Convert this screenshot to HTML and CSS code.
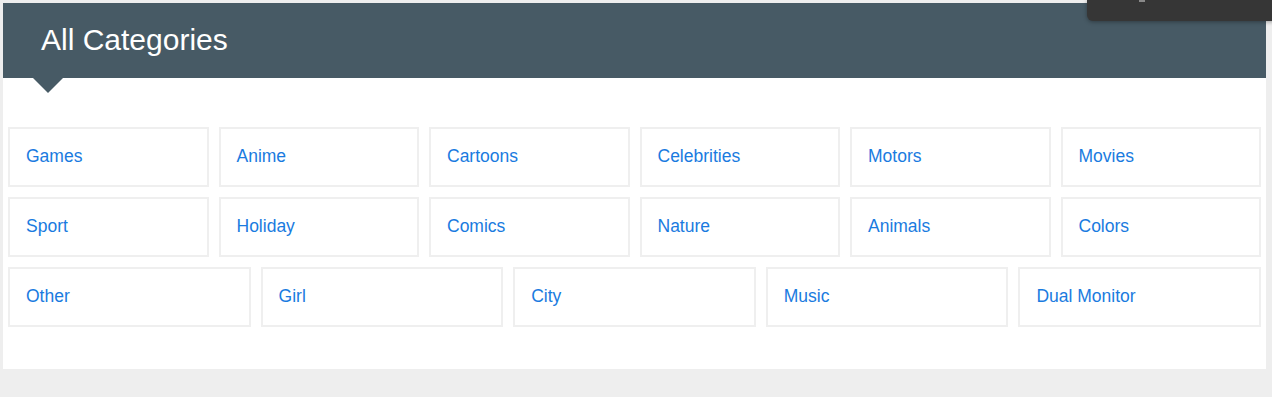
FILE: index.html
```html
<!DOCTYPE html>
<html lang="en">
<head>
    <meta charset="UTF-8">
    <meta name="viewport" content="width=device-width, initial-scale=1.0">
    <title>All Categories</title>
    <link rel="stylesheet" href="styles.css">
</head>
<body>
    <div class="panel">
        <div class="panel-head">
            <h2>All Categories</h2>
        </div>
        <div class="cats">
            <ul class="row six">
                <li><a href="javascript:;">Games</a></li>
                <li><a href="javascript:;">Anime</a></li>
                <li><a href="javascript:;">Cartoons</a></li>
                <li><a href="javascript:;">Celebrities</a></li>
                <li><a href="javascript:;">Motors</a></li>
                <li><a href="javascript:;">Movies</a></li>
                <li><a href="javascript:;">Sport</a></li>
                <li><a href="javascript:;">Holiday</a></li>
                <li><a href="javascript:;">Comics</a></li>
                <li><a href="javascript:;">Nature</a></li>
                <li><a href="javascript:;">Animals</a></li>
                <li><a href="javascript:;">Colors</a></li>
            </ul>
            <ul class="row five">
                <li><a href="javascript:;">Other</a></li>
                <li><a href="javascript:;">Girl</a></li>
                <li><a href="javascript:;">City</a></li>
                <li><a href="javascript:;">Music</a></li>
                <li><a href="javascript:;">Dual Monitor</a></li>
            </ul>
        </div>
    </div>
    <div class="toast"><span class="dot"></span></div>
</body>
</html>
```
FILE: styles.css
```css
*{
    margin: 0;
    padding: 0;
    box-sizing: border-box;
}
body{
    background: #eeeeee;
    padding: 3px;
    font-family: "Liberation Sans", Arial, sans-serif;
    height: 397px;
    overflow: hidden;
}
.panel{
    width: 1263px;
    background: #fff;
    padding-bottom: 42px;
}
.panel-head{
    height: 75px;
    background: #475a65;
    position: relative;
    padding-left: 38px;
    display: flex;
    align-items: center;
}
.panel-head h2{
    color: #fff;
    font-weight: normal;
    font-size: 30px;
    line-height: 1;
    margin-top: -2px;
}
/* little arrow under the title bar */
.panel-head:after{
    content: "";
    position: absolute;
    left: 30px;
    top: 75px;
    border-left: 15px solid transparent;
    border-right: 15px solid transparent;
    border-top: 15px solid #475a65;
}
.cats{
    padding: 49px 5px 0;
}
.row{
    list-style: none;
    display: grid;
    gap: 10px;
    margin-bottom: 10px;
}
.row.six{
    grid-template-columns: repeat(6, 1fr);
}
.row.five{
    grid-template-columns: repeat(5, 1fr);
    margin-bottom: 0;
}
.row li{
    height: 60px;
    border: 2px solid #efefef;
    display: flex;
    align-items: center;
    padding-left: 16px;
    padding-bottom: 2px;
}
.row li a{
    color: #1a7be0;
    text-decoration: none;
    font-size: 17.5px;
}
.toast{
    position: absolute;
    left: 1087px;
    top: 0;
    width: 200px;
    height: 21px;
    background: #363636;
    border-bottom-left-radius: 6px;
    box-shadow: 0 1px 4px rgba(0,0,0,.35);
}
.toast .dot{
    position: absolute;
    left: 52px;
    top: 0;
    width: 6px;
    height: 2px;
    background: #8a8a8a;
}
```
